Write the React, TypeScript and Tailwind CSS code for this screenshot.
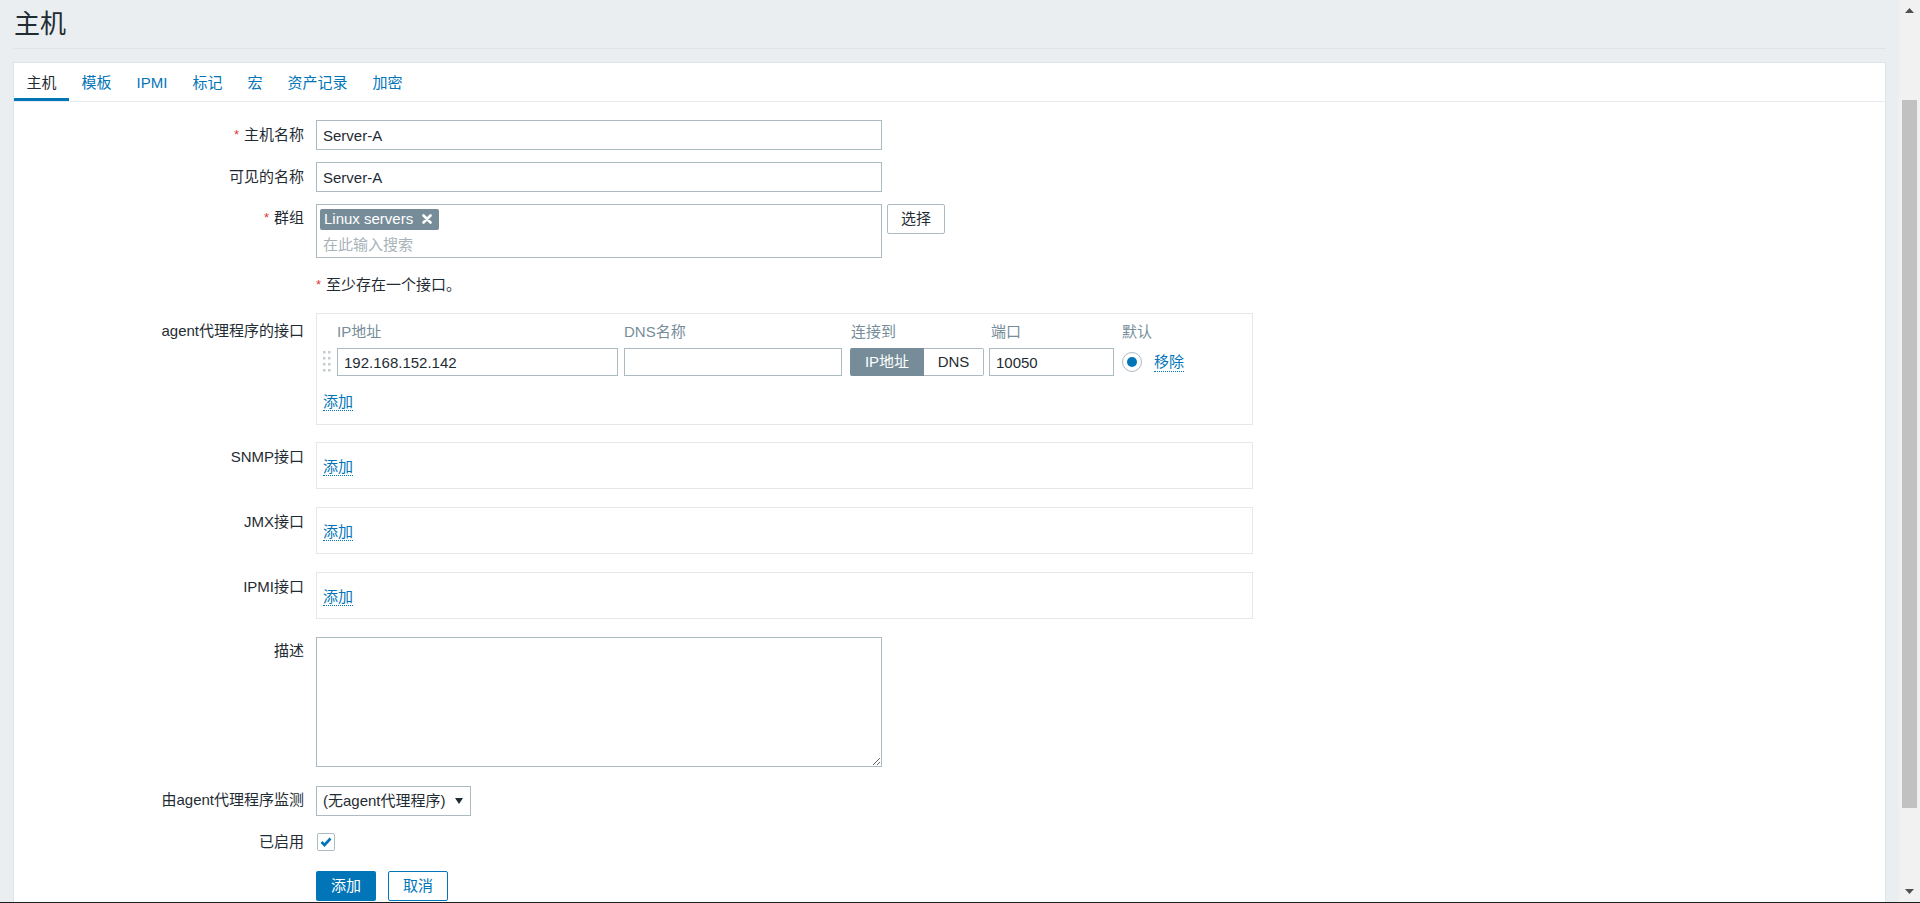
import React from "react"

const inputCls =
  "h-[30px] border border-[#acbbc2] bg-white px-[6px] text-[15px] text-[#1f2c33] outline-none"

function Req() {
  return <span className="text-[#e33734] text-[13px] mr-[5px] align-top">*</span>
}

function AddLink() {
  return (
    <span className="text-[#0275b8] leading-[18px] border-b border-dotted border-[#0275b8]">
      添加
    </span>
  )
}

function Row({
  label,
  labelCls = "pt-[6px]",
  className = "",
  children,
}: {
  label: React.ReactNode
  labelCls?: string
  className?: string
  children: React.ReactNode
}) {
  return (
    <div className={"grid grid-cols-[290px_1fr] gap-x-[12px] " + className}>
      <div className={"text-right leading-[18px] " + labelCls}>{label}</div>
      <div className="flex items-start">{children}</div>
    </div>
  )
}

function DragHandle() {
  return (
    <svg width="8" height="22" viewBox="0 0 8 22">
      {[0, 6, 12, 18].map((y) => (
        <g key={y} fill="#c3ccd1">
          <rect x="0" y={y} width="2.5" height="2.5" />
          <rect x="5" y={y} width="2.5" height="2.5" />
        </g>
      ))}
    </svg>
  )
}

function EmptyIface({ label, className }: { label: string; className: string }) {
  return (
    <Row label={label} className={className}>
      <div className="w-[937px] h-[47px] border border-[#e4e8eb] pl-[6px] pt-[13px]">
        <AddLink />
      </div>
    </Row>
  )
}

export default function App() {
  return (
    <div className="w-[1920px] h-[903px] flex flex-col overflow-hidden bg-[#ebeef0] text-[15px] text-[#1f2c33] font-['Liberation_Sans','Noto_Sans_CJK_SC',sans-serif]">
      <div className="flex flex-1 min-h-0">
        {/* page */}
        <div className="w-[1899px] px-[13px] flex flex-col min-h-0">
          <div className="h-[49px] border-b border-[#dfe4e7] flex items-center pb-[1px]">
            <h1 className="text-[26px] leading-none pl-[1px]">主机</h1>
          </div>

          <div className="mt-[13px] flex-1 bg-white border border-[#dfe4e7] border-b-0">
            {/* tabs */}
            <div className="h-[39px] flex border-b border-[#e9ecef]">
              {["主机", "模板", "IPMI", "标记", "宏", "资产记录", "加密"].map((t, i) => (
                <div
                  key={t}
                  className={
                    "px-[12.5px] pt-[5px] flex items-center border-b-[3px] " +
                    (i === 0
                      ? "border-[#0275b8] text-[#1f2c33]"
                      : "border-transparent text-[#0275b8]")
                  }
                >
                  {t}
                </div>
              ))}
            </div>

            {/* form */}
            <div className="pt-[18px]">
              <Row label={<><Req />主机名称</>}>
                <input className={inputCls + " w-[566px]"} defaultValue="Server-A" />
              </Row>

              <Row label="可见的名称" className="mt-[12px]">
                <input className={inputCls + " w-[566px]"} defaultValue="Server-A" />
              </Row>

              <Row label={<><Req />群组</>} labelCls="pt-[5px]" className="mt-[12px]">
                <div className="w-[566px] h-[54px] border border-[#acbbc2] px-[3px] pt-[3px]">
                  <div className="inline-flex items-center h-[21px] bg-[#768d99] text-white rounded-[2px] pl-[4px] pr-[7px] leading-[18px]">
                    Linux servers
                    <svg className="ml-[9px]" width="10" height="10" viewBox="0 0 10 10">
                      <path d="M1.5 1.5 L8.5 8.5 M8.5 1.5 L1.5 8.5" stroke="white" strokeWidth="2.6" strokeLinecap="round" />
                    </svg>
                  </div>
                  <div className="mt-[5px] ml-[3px] leading-[18px] text-[#a8b3b9]">在此输入搜索</div>
                </div>
                <button className="ml-[5px] w-[58px] h-[30px] border border-[#acbbc2] rounded-[2px] bg-white text-[#1f2c33]">
                  选择
                </button>
              </Row>

              <Row label="" className="mt-[12px]">
                <div className="h-[30px] flex items-center leading-[18px]">
                  <Req />至少存在一个接口。
                </div>
              </Row>

              <Row label="agent代理程序的接口" labelCls="pt-[9px]" className="mt-[13px]">
                <div className="w-[937px] h-[112px] border border-[#e4e8eb] pl-[6px] pt-[9px]">
                  <div className="grid grid-cols-[14px_287px_226px_139px_133px_auto] leading-[18px] text-[#768d99]">
                    <div />
                    <div>IP地址</div>
                    <div>DNS名称</div>
                    <div className="pl-[1px]">连接到</div>
                    <div className="pl-[2px]">端口</div>
                    <div>默认</div>
                  </div>
                  <div className="mt-[7px] grid grid-cols-[14px_287px_226px_139px_133px_auto] items-center">
                    <div className="flex items-center h-[28px]">
                      <DragHandle />
                    </div>
                    <input className="h-[28px] w-[281px] border border-[#acbbc2] px-[6px] outline-none" defaultValue="192.168.152.142" />
                    <input className="h-[28px] w-[218px] border border-[#acbbc2] px-[6px] outline-none" defaultValue="" />
                    <div className="flex h-[28px] w-[134px]">
                      <div className="w-[74px] flex items-center justify-center bg-[#768d99] text-white rounded-l-[2px]">
                        IP地址
                      </div>
                      <div className="w-[60px] flex items-center justify-center border border-l-0 border-[#acbbc2] rounded-r-[2px]">
                        DNS
                      </div>
                    </div>
                    <input className="h-[28px] w-[125px] border border-[#acbbc2] px-[6px] outline-none" defaultValue="10050" />
                    <div className="flex items-center">
                      <div className="w-[20px] h-[20px] rounded-full border border-[#acbbc2] flex items-center justify-center">
                        <div className="w-[10px] h-[10px] rounded-full bg-[#0275b8]" />
                      </div>
                      <span className="ml-[12px] text-[#0275b8] leading-[18px] border-b border-dotted border-[#0275b8]">
                        移除
                      </span>
                    </div>
                  </div>
                  <div className="mt-[15px]">
                    <AddLink />
                  </div>
                </div>
              </Row>

              <EmptyIface label="SNMP接口" className="mt-[17px]" />
              <EmptyIface label="JMX接口" className="mt-[18px]" />
              <EmptyIface label="IPMI接口" className="mt-[18px]" />

              <Row label="描述" labelCls="pt-[5px]" className="mt-[18px]">
                <textarea className="w-[566px] h-[130px] border border-[#acbbc2] px-[6px] py-[4px] outline-none" />
              </Row>

              <Row label="由agent代理程序监测" labelCls="pt-[5px]" className="mt-[19px]">
                <div className="w-[155px] h-[30px] border border-[#acbbc2] flex items-center justify-between pl-[6px] pr-[7px]">
                  <span>(无agent代理程序)</span>
                  <svg width="8" height="6" viewBox="0 0 8 6">
                    <path d="M0 0 L8 0 L4 6 Z" fill="#1f2c33" />
                  </svg>
                </div>
              </Row>

              <Row label="已启用" labelCls="pt-[0px]" className="mt-[17px]">
                <div className="ml-[1px] w-[18px] h-[18px] border border-[#acbbc2] rounded-[2px] flex items-center justify-center">
                  <svg width="12" height="10" viewBox="0 0 12 10">
                    <path d="M1.5 5 L4.5 8 L10.5 1.5" stroke="#0275b8" strokeWidth="2.6" fill="none" />
                  </svg>
                </div>
              </Row>

              <Row label="" className="mt-[20px]">
                <button className="w-[60px] h-[30px] bg-[#0275b8] text-white rounded-[2px]">添加</button>
                <button className="ml-[12px] w-[60px] h-[30px] border border-[#0275b8] text-[#0275b8] bg-white rounded-[2px]">
                  取消
                </button>
              </Row>
            </div>
          </div>
        </div>

        {/* scrollbar */}
        <div className="w-[21px] bg-[#f1f1f1] flex flex-col">
          <div className="h-[21px] flex items-center justify-center">
            <svg width="9" height="5" viewBox="0 0 9 5">
              <path d="M0 5 L4.5 0 L9 5 Z" fill="#505050" />
            </svg>
          </div>
          <div className="flex-1 pt-[79px]">
            <div className="ml-[3px] w-[15px] h-[708px] bg-[#c1c1c1]" />
          </div>
          <div className="h-[21px] flex items-center justify-center">
            <svg width="9" height="5" viewBox="0 0 9 5">
              <path d="M0 0 L9 0 L4.5 5 Z" fill="#505050" />
            </svg>
          </div>
        </div>
      </div>
      <div className="h-[1px] bg-[#1e1e1e]" />
    </div>
  )
}
